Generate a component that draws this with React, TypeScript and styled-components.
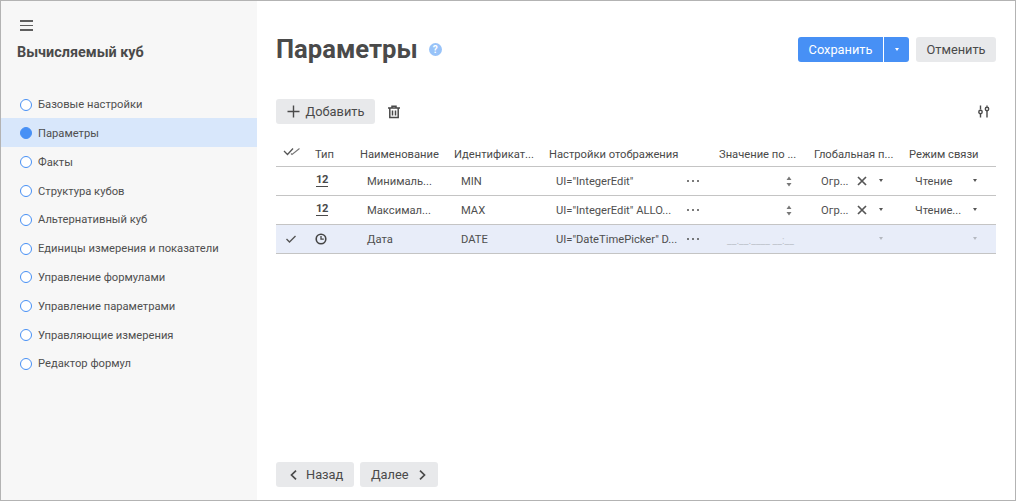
import React from "react";
import styled, { createGlobalStyle } from "styled-components";

const Global = createGlobalStyle`
  html, body { margin: 0; padding: 0; background: #fff; }
  body { font-family: Roboto, "Liberation Sans", sans-serif; color: #4a4a4a; }
  #root { width: 1016px; height: 501px; }
`;

const Frame = styled.div`
  width: 1016px; height: 501px; box-sizing: border-box;
  border: 1px solid #b3b3b3; display: flex; overflow: hidden; background: #fff;
`;
const Sidebar = styled.aside`
  width: 256px; flex: none; background: #f7f7f7; display: flex; flex-direction: column;
`;
const Burger = styled.button`
  width: 13px; height: 11px; margin: 19px 0 0 19px; padding: 0; border: 0; background: none;
  display: flex; flex-direction: column; justify-content: space-between;
  span { display: block; height: 1.6px; background: #5f5f5f; }
`;
const SideTitle = styled.h2`
  margin: 13px 0 0 16px; font-size: 14.4px; line-height: 18px; font-weight: 700; color: #4a4a4a;
`;
const Steps = styled.nav`
  margin-top: 27.3px; display: flex; flex-direction: column;
`;
const Step = styled.div<{ $active?: boolean }>`
  height: 28.8px; box-sizing: border-box; padding: 2px 0 0 19px; display: flex; align-items: center; gap: 6px;
  font-size: 11.2px; color: #4f4f4f;
  background: ${p => (p.$active ? "#d8e7fb" : "transparent")};
`;
const Dot = styled.span<{ $active?: boolean }>`
  width: 12px; height: 12px; border-radius: 50%; box-sizing: border-box; flex: none;
  border: 1px solid #4790f5; background: ${p => (p.$active ? "#4790f5" : "#fff")};
`;
const Main = styled.main`
  flex: 1; padding: 0 19px; display: flex; flex-direction: column; min-width: 0;
`;
const Header = styled.header`
  height: 97px; display: flex; align-items: center; justify-content: space-between; flex: none;
`;
const TitleWrap = styled.div`
  display: flex; align-items: center; gap: 11px;
`;
const Title = styled.h1`
  margin: 0 0 2px; font-size: 25.6px; line-height: 34px; font-weight: 700; color: #4a4a4a;
`;
const Help = styled.span`
  width: 13px; height: 13px; border-radius: 50%; background: #98c3f9; color: #fff;
  font-size: 10px; font-weight: 700; line-height: 13px; text-align: center;
`;
const Actions = styled.div`
  display: flex; gap: 7px; align-items: center;
`;
const Split = styled.div`
  display: flex; height: 25px; border-radius: 3px; overflow: hidden; color: #fff; font-size: 12.8px;
`;
const SplitMain = styled.button`
  width: 85px; border: 0; padding: 0; background: #4790f5; color: #fff; font: inherit;
`;
const SplitArrow = styled.button`
  width: 26px; border: 0; border-left: 1px solid #fff; padding: 0; background: #4790f5;
  display: flex; align-items: center; justify-content: center;
`;
const GreyButton = styled.button<{ $w: number }>`
  width: ${p => p.$w}px; height: 25px; border: 0; border-radius: 3px; background: #e8e9eb; color: #4a4a4a;
  font: 12.8px Roboto, sans-serif; padding: 0; display: flex; align-items: center; justify-content: center; gap: 6px;
`;
const NavButton = styled(GreyButton)<{ $pad: number }>`
  justify-content: flex-start; padding-left: ${p => p.$pad}px;
`;
const Toolbar = styled.div`
  height: 27px; display: flex; align-items: center; gap: 12px; flex: none;
`;
const IconBtn = styled.span`
  display: flex; align-items: center; justify-content: center; margin-left: auto; width: 16px; margin-right: 4px;
`;
const TrashBtn = styled.span`
  display: flex; width: 14px; height: 14px;
`;
const Table = styled.div`
  margin-top: 15px; display: flex; flex-direction: column; flex: none;
`;
const cols = "29px 45px 94px 95px 170px 95px 95px 97px";
const HeadRow = styled.div`
  display: grid; grid-template-columns: ${cols}; height: 26px; border-bottom: 1px solid #c4c4c4; align-items: center;
  font-size: 11.2px; color: #4a4a4a;
`;
const HeadCell = styled.div`
  padding: 2px 0 0 10px; white-space: nowrap;
`;
const CheckHead = styled.div`
  display: flex; justify-content: center; padding: 0 0 3px 3px;
`;
const Row = styled.div<{ $selected?: boolean }>`
  display: grid; grid-template-columns: ${cols}; height: 28px; border-bottom: 1px solid #c4c4c4; align-items: center;
  font-size: 11.2px; color: #4f4f4f; background: ${p => (p.$selected ? "#e8edf9" : "transparent")};
`;
const IconCell = styled.div`
  display: flex; align-items: center; padding-left: 10px; height: 100%;
`;
const CheckCell = styled.div`
  display: flex; align-items: center; justify-content: center;
`;
const TypeNum = styled.span`
  font-size: 11.2px; font-weight: 700; letter-spacing: -0.5px; border-bottom: 1px solid #4a4a4a; color: #4a4a4a; line-height: 10px;
  margin-left: 1px; padding: 0 0.5px 1px 0;
`;
const TextCell = styled.div`
  padding-left: 17px; white-space: nowrap;
`;
const Between = styled.div`
  display: flex; align-items: center; height: 100%; padding-left: 17px; min-width: 0; white-space: nowrap;
`;
const Dots = styled.span`
  display: flex; gap: 2.5px; margin-left: auto; margin-right: 10px;
  i { width: 2.4px; height: 2.4px; border-radius: 50%; background: #4f4f4f; display: block; }
`;
const Spin = styled.div`
  display: flex; justify-content: flex-end; padding-right: 12px; align-items: center;
`;
const DateMask = styled.div`
  padding: 3px 0 0 18px; font-size: 10.4px; color: #c0c5cd; white-space: nowrap;
`;
const Footer = styled.footer`
  margin-top: auto; height: 25px; margin-bottom: 13px; display: flex; gap: 6px; flex: none;
`;
const Caret = styled.span<{ $c: string }>`
  display: block; width: 0; height: 0; border-left: 2.5px solid transparent; border-right: 2.5px solid transparent;
  border-top: 3px solid ${p => p.$c};
`;
const SelectCell = styled.div<{ $x: number }>`
  display: flex; align-items: center; height: 100%; padding-left: ${p => p.$x}px; position: relative; min-width: 0; white-space: nowrap;
`;
const CaretBox = styled.span<{ $x: number }>`
  position: absolute; left: ${p => p.$x}px; top: 50%; margin-top: -2px; display: block;
`;
const CrossBox = styled.span`
  position: absolute; left: 53px; top: 50%; margin-top: -5px; display: flex;
`;
const ButtonLabel = styled.span<{ $l?: number; $r?: number }>`
  margin-left: ${p => p.$l ?? 0}px; margin-right: ${p => p.$r ?? 0}px;
`;

const steps = ["Базовые настройки", "Параметры", "Факты", "Структура кубов", "Альтернативный куб", "Единицы измерения и показатели", "Управление формулами", "Управление параметрами", "Управляющие измерения", "Редактор формул"];

const Tick = () => (
  <svg width="12" height="10" viewBox="0 0 12 10"><path d="M1.5 5 L4.5 8 L10.5 2" fill="none" stroke="#555" strokeWidth="1.4" /></svg>
);
const Ticks = () => (
  <svg width="18" height="9" viewBox="0 0 18 9"><path d="M1 4 L4.5 7.5 L10 1.5" fill="none" stroke="#555" strokeWidth="1.3" /><path d="M8 6.5 L9 7.5 L16.5 1.5" fill="none" stroke="#777" strokeWidth="1.1" /></svg>
);
const Clock = () => (
  <svg width="12" height="12" viewBox="0 0 12 12"><circle cx="6" cy="6" r="4.8" fill="none" stroke="#444" strokeWidth="1.6" /><path d="M6 3 V6.2 H8.8" fill="none" stroke="#444" strokeWidth="1.3" /></svg>
);
const Stepper = () => (
  <svg width="6" height="11" viewBox="0 0 6 11"><path d="M3 0.5 L5.5 4 H0.5 Z M3 10.5 L5.5 7 H0.5 Z" fill="#777" /></svg>
);
const Cross = () => (
  <svg width="10" height="10" viewBox="0 0 10 10"><path d="M1 1 L9 9 M9 1 L1 9" stroke="#555" strokeWidth="1.7" fill="none" /></svg>
);
const DotsIcon = () => <Dots><i /><i /><i /></Dots>;

const RowView = ({ sel, type, name, id, ui, link }: any) => (
  <Row $selected={sel}>
    <CheckCell>{sel && <Tick />}</CheckCell>
    <IconCell>{type === "12" ? <TypeNum>12</TypeNum> : <Clock />}</IconCell>
    <TextCell>{name}</TextCell>
    <TextCell>{id}</TextCell>
    <Between><span>{ui}</span><DotsIcon /></Between>
    {sel ? <DateMask>__.__.____ __:__</DateMask> : <Spin><Stepper /></Spin>}
    <SelectCell $x={17}>
      {!sel && <span>Огр...</span>}
      {!sel && <CrossBox><Cross /></CrossBox>}
      <CaretBox $x={75}><Caret $c={sel ? "#b4b8c0" : "#555"} /></CaretBox>
    </SelectCell>
    <SelectCell $x={16}>
      {!sel && <span>{link}</span>}
      <CaretBox $x={74}><Caret $c={sel ? "#b4b8c0" : "#555"} /></CaretBox>
    </SelectCell>
  </Row>
);

export default function App() {
  return (
    <Frame>
      <Global />
      <Sidebar>
        <Burger aria-label="menu"><span /><span /><span /></Burger>
        <SideTitle>Вычисляемый куб</SideTitle>
        <Steps>
          {steps.map((s, i) => (
            <Step key={s} $active={i === 1}><Dot $active={i === 1} />{s}</Step>
          ))}
        </Steps>
      </Sidebar>
      <Main>
        <Header>
          <TitleWrap><Title>Параметры</Title><Help>?</Help></TitleWrap>
          <Actions>
            <Split>
              <SplitMain>Сохранить</SplitMain>
              <SplitArrow><Caret $c="#fff" /></SplitArrow>
            </Split>
            <GreyButton $w={80}>Отменить</GreyButton>
          </Actions>
        </Header>
        <Toolbar>
          <GreyButton $w={99}>
            <svg width="13" height="13" viewBox="0 0 13 13"><path d="M6.5 0.5 V12.5 M0.5 6.5 H12.5" stroke="#4a4a4a" strokeWidth="1.4" fill="none" /></svg>
            Добавить
          </GreyButton>
          <TrashBtn>
            <svg width="14" height="14" viewBox="0 0 14 14"><path d="M1 3 H13 M5 3 V1.2 H9 V3 M2.8 3 V12.5 H11.2 V3 M5.5 5.5 V10.5 M8.5 5.5 V10.5" stroke="#4a4a4a" strokeWidth="1.5" fill="none" /></svg>
          </TrashBtn>
          <IconBtn>
            <svg width="12" height="13" viewBox="0 0 12 13"><path d="M2.5 0.5 V4.5 M2.5 9 V12.5 M9 0.5 V1.8 M9 6 V12.5" stroke="#4a4a4a" strokeWidth="1.4" fill="none" /><circle cx="2.5" cy="7" r="1.7" fill="none" stroke="#4a4a4a" strokeWidth="1.4" /><circle cx="9" cy="4" r="1.7" fill="none" stroke="#4a4a4a" strokeWidth="1.4" /></svg>
          </IconBtn>
        </Toolbar>
        <Table>
          <HeadRow>
            <CheckHead><Ticks /></CheckHead>
            <HeadCell>Тип</HeadCell>
            <HeadCell>Наименование</HeadCell>
            <HeadCell>Идентификат...</HeadCell>
            <HeadCell>Настройки отображения</HeadCell>
            <HeadCell>Значение по ...</HeadCell>
            <HeadCell>Глобальная п...</HeadCell>
            <HeadCell>Режим связи</HeadCell>
          </HeadRow>
          <RowView type="12" name="Минималь..." id="MIN" ui={'UI="IntegerEdit"'} link="Чтение" />
          <RowView type="12" name="Максимал..." id="MAX" ui={'UI="IntegerEdit" ALLO...'} link="Чтение..." />
          <RowView sel type="clock" name="Дата" id="DATE" ui={'UI="DateTimePicker" D...'} />
        </Table>
        <Footer>
          <NavButton $w={78} $pad={14}>
            <svg width="7" height="10" viewBox="0 0 7 10"><path d="M6 0.7 L1.5 5 L6 9.3" stroke="#4a4a4a" strokeWidth="1.7" fill="none" /></svg>
            <ButtonLabel $l={3}>Назад</ButtonLabel>
          </NavButton>
          <NavButton $w={78} $pad={11}>
            <ButtonLabel $r={4}>Далее</ButtonLabel>
            <svg width="7" height="10" viewBox="0 0 7 10"><path d="M1 0.7 L5.5 5 L1 9.3" stroke="#4a4a4a" strokeWidth="1.7" fill="none" /></svg>
          </NavButton>
        </Footer>
      </Main>
    </Frame>
  );
}
